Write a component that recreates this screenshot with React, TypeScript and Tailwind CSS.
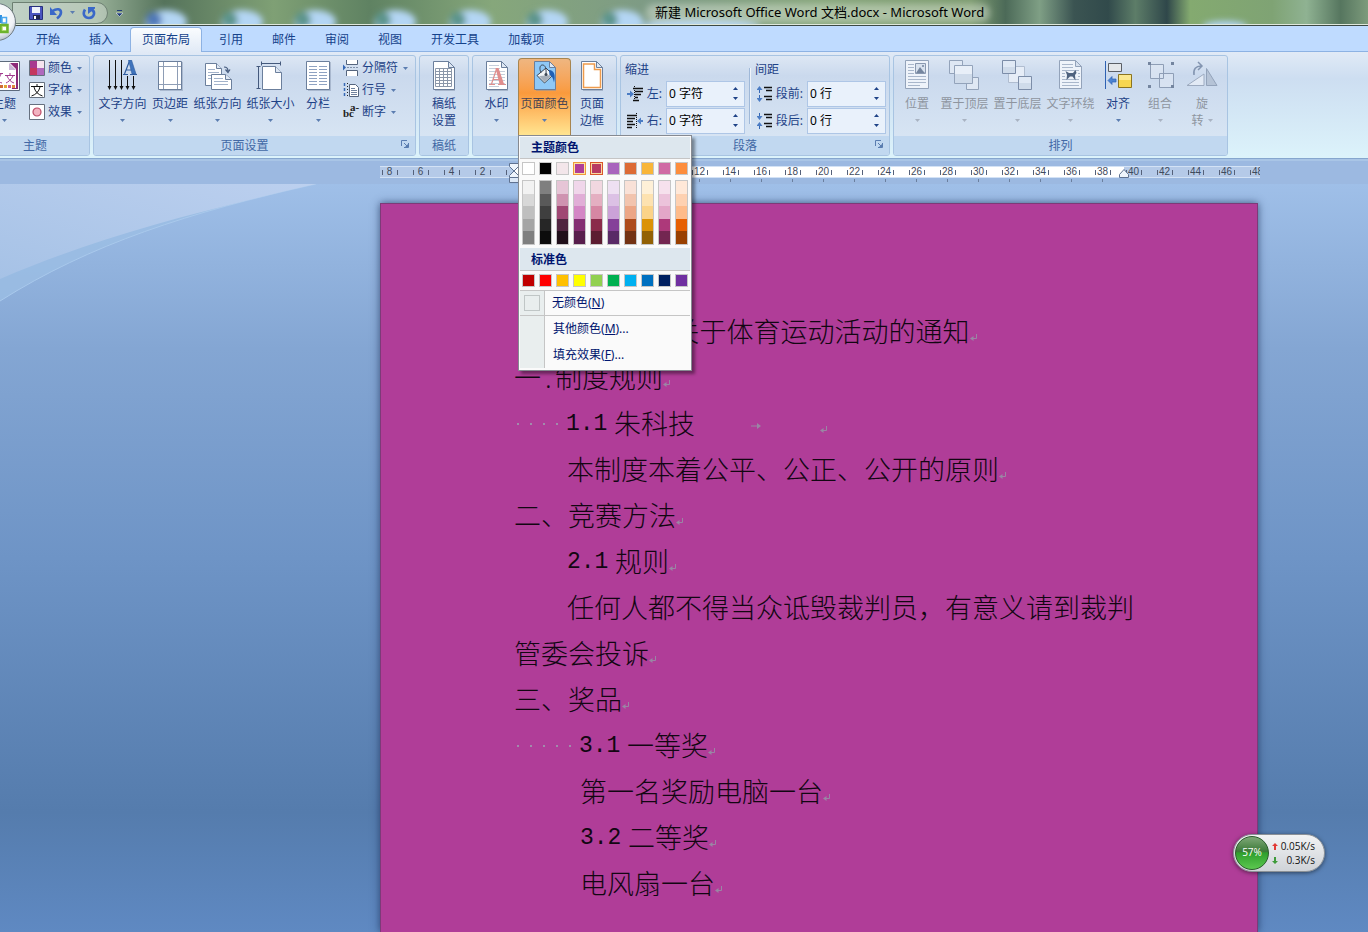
import type { ReactNode } from 'react';

const THEME = ['#ffffff', '#000000', '#f3e6ea', '#b03d98', '#b83a63', '#a964bd', '#dd6b35', '#f9b639', '#d06aa4', '#fd8d3c'];

const SHADES = [
  ['#f2f2f2', '#d8d8d8', '#bfbfbf', '#a5a5a5', '#7f7f7f'],
  ['#7f7f7f', '#595959', '#3f3f3f', '#262626', '#0c0c0c'],
  ['#e6c5d6', '#cf93b0', '#a04874', '#502440', '#200f1a'],
  ['#f0d6ea', '#e1aed7', '#d486c5', '#842e72', '#581e4c'],
  ['#f1d7e0', '#e4afc1', '#d687a3', '#8a2b4a', '#5c1d31'],
  ['#eee0f2', '#dcc1e5', '#cba2d8', '#854099', '#592a66'],
  ['#f9e1d7', '#f2c4ae', '#eca686', '#ad4b1c', '#733213'],
  ['#fef0d7', '#fde2b0', '#fbd388', '#db9206', '#926104'],
  ['#f6e1ed', '#ecc3db', '#e3a6c8', '#ad397a', '#732651'],
  ['#ffe8d8', '#fed1b1', '#febb8a', '#e65f02', '#994001'],
];

const STANDARD = ['#c00000', '#ff0000', '#ffc000', '#ffff00', '#92d050', '#00b050', '#00b0f0', '#0070c0', '#002060', '#7030a0'];

const TABS = ['开始', '插入', '页面布局', '引用', '邮件', '审阅', '视图', '开发工具', '加载项'];

const RULER = [8, 6, 4, 2, 0, 2, 4, 6, 8, 10, 12, 14, 16, 18, 20, 22, 24, 26, 28, 30, 32, 34, 36, 38, 40, 42, 44, 46, 48];

function Arrow({ dim = false }: { dim?: boolean }) {
  return (
    <svg width="5" height="3" viewBox="0 0 5 3" className="shrink-0" aria-hidden="true">
      <path d="M0 0h5L2.500 3z" fill={dim ? '#a9b3c2' : '#5b7db0'} />
    </svg>
  );
}

function Icon({ size = 32, children }: { size?: number; children: ReactNode }) {
  return (
    <svg width={size} height={size} viewBox={`0 0 ${size} ${size}`} fill="none" className="shrink-0" aria-hidden="true">
      {children}
    </svg>
  );
}

const Sheet = ({ stroke = '#6b7f9c', fill = '#fff' }: { stroke?: string; fill?: string }) => (
  <>
    <path d="M6 2h14l6 6v22H6z" fill="#7f8fa8" opacity=".5" transform="translate(1 1)" />
    <path d="M5.500 1.500h15l6 6v22h-21z" fill={fill} stroke={stroke} />
    <path d="M20.500 1.500v6h6z" fill="#dfe8f4" stroke={stroke} />
  </>
);

const icons = {
  theme: (
    <Icon>
      <path d="M-8 1.500h39.500v29H-8z" fill="#fff" stroke="#5d6a7c" />
      <path d="M21 3h9v26H24z" fill="#8d2a79" />
      <path d="M4 3h18l6 6v19H4z" fill="#fff" />
      <path d="M21 3v7h7z" fill="#c9b6d6" />
      <path d="M9 10v3M3 13.500h12M5 14c2 5 5 8 9 9M13 14c-2 5-5 8-9 9M22 13v2M17 15.500h10M19 16c2 4 4 6 7 7M25 16c-2 4-5 6-7 7" stroke="#a13a8d" />
      <path d="M8 25h3v3H8z" fill="#e2a532" />
      <path d="M12 25h3v3h-3z" fill="#d06a35" />
      <path d="M16 25h3v3h-3z" fill="#e2a532" />
      <path d="M20 25h3v3h-3z" fill="#cf5b8f" />
      <path d="M24 25h3v3h-3z" fill="#e08a3c" />
    </Icon>
  ),
  colors: (
    <Icon size={16}>
      <path d="M.5.5h15v15H.5z" fill="#fff" stroke="#66707f" />
      <path d="M1 1h7v7H1z" fill="#a8398f" />
      <path d="M8 1h7v7H8z" fill="#f6e4ee" />
      <path d="M1 8h7v7H1z" fill="#c4375f" />
      <path d="M8 8h7v7H8z" fill="#b068bd" />
    </Icon>
  ),
  fonts: (
    <Icon size={16}>
      <path d="M.5.5h15v15H.5z" fill="#fff" stroke="#66707f" />
      <path d="M8 2v2.500M2 4.500h12M5 5c1 4.500 4 7.500 8.500 9M11 5c-1 4.500-4 7.500-8.500 9" stroke="#111" />
    </Icon>
  ),
  effects: (
    <Icon size={16}>
      <path d="M.5.5h15v15H.5z" fill="#fff" stroke="#66707f" />
      <circle cx="8" cy="8" r="4" fill="#f3b3c0" stroke="#bd4a66" strokeWidth="1.200" />
    </Icon>
  ),
  textDir: (
    <Icon>
      <path d="M2.500 0v27M8.500 0v27M14.500 0v27M20.500 16v11M26.500 16v11" stroke="#111" />
      <path d="M.5 26h4l-2 4zM6.500 26h4l-2 4zM12.500 26h4l-2 4zM18.500 26h4l-2 4zM24.500 26h4l-2 4z" fill="#111" />
      <path d="M16 14.500h5M23 14.500h7" stroke="#2f5c9e" />
      <path d="M22.500 1L17.500 14M19 10h7" stroke="#2f5c9e" strokeWidth="1.200" />
      <path d="M21.500 0H24.500L29 14h-4z" fill="#3f74bd" stroke="#2f5c9e" strokeWidth=".6" />
    </Icon>
  ),
  margins: (
    <Icon>
      <path d="M6 2h23v29H6z" fill="#7f8fa8" opacity=".45" />
      <path d="M4.500 1.500h23v28h-23z" fill="#fff" stroke="#6b7f9c" />
      <path d="M9.500 2v27M23.500 2v27M5 6.500h22M5 24.500h22" stroke="#8e9db5" />
    </Icon>
  ),
  orient: (
    <Icon>
      <path d="M3.500 3.500h11l5 5v17h-16z" fill="#fff" stroke="#6b7f9c" />
      <path d="M14.500 3.500v5h5" fill="#dfe8f4" stroke="#6b7f9c" />
      <path d="M6 9.500h7M6 12.500h11M6 15.500h5M6 18.500h3" stroke="#a3b3cb" />
      <path d="M9.500 14.500h14l6 5v10h-20z" fill="#fff" stroke="#6b7f9c" />
      <path d="M23.500 14.500v5h6" fill="#dfe8f4" stroke="#6b7f9c" />
      <path d="M12 18.500h9M12 21.500h14M12 24.500h14" stroke="#a3b3cb" />
      <path d="M22 7c3 0 4 1.500 4 4M23.500 9.500l2.500 3 2-3" stroke="#44597c" strokeWidth="1.200" />
    </Icon>
  ),
  size: (
    <Icon>
      <path d="M6 3.500h20M6.500 1.500v4M25.500 1.500v4M3.500 6v23M1.500 6.500h4M1.500 28.500h4" stroke="#44597c" />
      <path d="M7.500 6.500h13l6 6v17h-19z" fill="#fff" stroke="#6b7f9c" />
      <path d="M20.500 6.500v6h6" fill="#dfe8f4" stroke="#6b7f9c" />
    </Icon>
  ),
  columns: (
    <Icon>
      <path d="M6 2h23v29H6z" fill="#7f8fa8" opacity=".45" />
      <path d="M4.500 1.500h23v28h-23z" fill="#fff" stroke="#6b7f9c" />
      <path d="M7 6.500h8M17 6.500h8M7 9.500h8M17 9.500h8M7 12.500h8M17 12.500h8M7 15.500h8M17 15.500h8M7 18.500h8M17 18.500h8M7 21.500h8M17 21.500h8M7 24.500h8M17 24.500h8" stroke="#8ea2c2" />
    </Icon>
  ),
  breaks: (
    <Icon size={16}>
      <path d="M3.500 0v4.500h11V0M3.500 16v-5.500h11V16" fill="#fff" stroke="#55657e" />
      <path d="M4 7.500h12" stroke="#8191aa" strokeDasharray="2 1" />
      <path d="M0 4.500l3 3-3 3z" fill="#3668b5" />
    </Icon>
  ),
  lines: (
    <Icon size={16}>
      <path d="M1.500 1v3M1.500 6v3M1.500 11v3" stroke="#3668b5" strokeWidth="1.500" />
      <path d="M4.500 1v14" stroke="#222" strokeDasharray="1 2" />
      <path d="M6.500 2.500h6l3 3v9h-9z" fill="#fff" stroke="#55657e" />
      <path d="M8 6.500h4M8 8.500h6M8 10.500h6M8 12.500h6" stroke="#6f819d" />
    </Icon>
  ),
  grid: (
    <Icon>
      <Sheet />
      <path d="M7.500 8.500h16v18h-16zM7 11.500h17M7 14.500h17M7 17.500h17M7 20.500h17M7 23.500h17M11.500 8v18M15.500 8v18M19.500 8v18" stroke="#8b97a9" />
    </Icon>
  ),
  watermark: (
    <Icon>
      <Sheet />
      <path d="M8 5.500h10M8 8.500h11M8 11.500h16M8 14.500h16M8 17.500h16M8 20.500h16M8 23.500h16M8 26.500h10" stroke="#c5cedb" />
      <path d="M8 24.500h6M17 24.500h8M15.500 9L10.500 24M12 19.500h8" stroke="#dd8f8f" strokeWidth="1.200" />
      <path d="M14.500 8h3l5.500 16h-4.500z" fill="#e08d8d" />
    </Icon>
  ),
  pageColor: (
    <Icon>
      <Sheet fill="#8fc8f6" />
      <path d="M8 15.500l9-7.500 7 7-8.500 8z" fill="#f2f4f6" stroke="#3c4654" />
      <path d="M10 16l5.500 6 7.500-7z" fill="#a5adb7" />
      <path d="M12 13c-2-5-1-8 1.500-8s4 3 3.500 9" stroke="#3c4654" />
      <circle cx="17" cy="14.500" r="1.500" fill="#3c4654" />
      <path d="M20 10c5 0 7 5 5 12.500-1-4-1.500-6-4.500-7.500z" fill="#1f5fb4" />
    </Icon>
  ),
  border: (
    <Icon>
      <Sheet />
      <path d="M7.500 4h11v5.500h6v18h-17z" stroke="#ee9b4c" strokeWidth="1.500" />
    </Icon>
  ),
  position: (
    <Icon>
      <path d="M4.500 .5h23v28h-23z" fill="#eef3fa" stroke="#93a3ba" />
      <path d="M14.500 3.500h10v10h-10z" fill="#d9e2ee" stroke="#8a99b0" />
      <path d="M15 13l4-6 3 4 2 2z" fill="#75869f" />
      <circle cx="22" cy="6" r="1" fill="#75869f" />
      <path d="M7 4.500h6M7 7.500h6M7 10.500h6M7 13.500h6M7 16.500h18M7 19.500h18M7 22.500h18M7 25.500h12" stroke="#a9b7cb" />
    </Icon>
  ),
  front: (
    <Icon>
      <path d="M.5 .5h13v13h-13zM17.500 17.500h12v12h-12z" fill="#dfe8f4" stroke="#93a3ba" />
      <path d="M5.500 5.500h18v18h-18z" fill="#e8eff8" stroke="#93a3ba" />
      <path d="M6 14h17v9H6z" fill="#cfdbea" />
    </Icon>
  ),
  back: (
    <Icon>
      <path d="M6.500 6.500h16v16h-16z" fill="#e6edf7" stroke="#b0bdd0" />
      <path d="M.5 .5h13v13h-13zM16.500 16.500h13v13h-13z" fill="#e0e9f5" stroke="#7c8da8" />
      <path d="M1 7h12v6H1zM17 23h12v6H17z" fill="#cfdbea" />
    </Icon>
  ),
  wrap: (
    <Icon>
      <path d="M4.500 .5h16l6 6v22h-22z" fill="#eef3fa" stroke="#93a3ba" />
      <path d="M20.500 .5v6h6z" fill="#d6e0ee" stroke="#93a3ba" />
      <path d="M7 4.500h11M7 7.500h11M7 10.500h17M7 13.500h3M23 13.500h2M7 16.500h3M23 16.500h2M7 19.500h17M7 22.500h17M7 25.500h17" stroke="#a9b7cb" />
      <path d="M10.500 11l3.500 2h4l2.500-3 1 3-1.500 2 .5 5.500-3-4h-2.500l-3.500 3.500.5-5z" fill="#4f637f" />
    </Icon>
  ),
  align: (
    <Icon>
      <path d="M3.500 1v28" stroke="#2f62b3" />
      <path d="M6.500 3.500h13v8h-13z" fill="#e4e7ea" stroke="#5a5f66" />
      <path d="M16.500 14.500h13v13h-13z" fill="#f7d64f" stroke="#8b7420" />
      <path d="M17 15h12v5H17z" fill="#fbe88f" />
      <path d="M6 20.500l4-4v2.500h4v3h-4v2.500z" fill="#4b82d0" stroke="#2f62b3" strokeWidth=".7" />
    </Icon>
  ),
  group: (
    <Icon>
      <path d="M6.500 4.500h13v14h-13zM15.500 13.500h14v14h-14z" fill="#dfe8f4" fillOpacity=".6" stroke="#8e9eb6" />
      <path d="M4 2h3v3H4zM27 2h3v3h-3zM4 25h3v3H4zM27 25h3v3h-3z" fill="#74859f" />
    </Icon>
  ),
  rotate: (
    <Icon>
      <path d="M1 25.500h17V14z" fill="#e2eaf5" stroke="#9dabc0" />
      <path d="M20.500 8.500v17h10.500z" fill="#b5c3d6" stroke="#93a3ba" />
      <path d="M8 15c-1-6 2-9 7-9M12 2l4 4-4 4" stroke="#8294b0" strokeWidth="1.500" />
    </Icon>
  ),
  indentL: (
    <Icon size={16}>
      <path d="M6 2.500h10M8 5.500h8M8 8.500h6M8 11.500h3M6 14.500h6" stroke="#111" strokeWidth="1.500" />
      <path d="M7.500 0v16" stroke="#111" strokeDasharray="1 1" />
      <path d="M0 7h3V4.500L7 8l-4 3.500V9H0z" fill="#4b7cc4" />
    </Icon>
  ),
  indentR: (
    <Icon size={16}>
      <path d="M0 2.500h10M0 5.500h8M0 8.500h6M0 11.500h8M0 14.500h5" stroke="#111" strokeWidth="1.500" />
      <path d="M9.500 0v16" stroke="#111" strokeDasharray="1 1" />
      <path d="M16 7h-2V4.500L10 8l4 3.500V9h2z" fill="#4b7cc4" />
    </Icon>
  ),
  before: (
    <Icon size={16}>
      <path d="M7 1.500h8M9 4.500h6M7 10.500h8M9 13.500h6" stroke="#111" strokeWidth="1.500" />
      <path d="M2.500 2v5M2.500 9v5" stroke="#3668b5" />
      <path d="M2.500 0L5.500 4h-6zM2.500 16l3-4h-6z" fill="#4b7cc4" />
    </Icon>
  ),
  after: (
    <Icon size={16}>
      <path d="M7 1.500h8M9 4.500h6M7 10.500h8M9 13.500h6" stroke="#111" strokeWidth="1.500" />
      <path d="M2.500 0v5M2.500 11v5" stroke="#3668b5" />
      <path d="M2.500 7L5.500 3h-6zM2.500 9l3 4h-6z" fill="#4b7cc4" />
    </Icon>
  ),
};

function Hyphen() {
  return (
    <svg width="16" height="16" viewBox="0 0 16 16" className="shrink-0 overflow-visible" aria-hidden="true">
      <g fontFamily="Liberation Serif, serif" fontWeight="bold" fontSize="11" fill="#222">
        <text x="0" y="13">
          bc
        </text>
        <text x="7" y="7">
          a-
        </text>
      </g>
    </svg>
  );
}

type BigProps = {
  icon: ReactNode;
  lines: string[];
  width: string;
  arrow?: 'below' | 'inline' | 'none';
  disabled?: boolean;
  active?: boolean;
};

function BigButton({ icon, lines, width, arrow = 'below', disabled = false, active = false }: BigProps) {
  const tone = disabled ? 'text-[#8e959f]' : active ? 'text-[#4a4552]' : 'text-[#1e4287]';
  const face = active
    ? 'rounded-t-sm border-x border-t border-[#a8854f] bg-linear-to-b from-[#efb680] via-[#fa9a3c] via-45% to-[#ffe590] pt-px'
    : 'pt-1';
  return (
    <button type="button" disabled={disabled} className={`flex h-full flex-col items-center whitespace-nowrap ${width} ${tone} ${face}`}>
      {icon}
      <span className="mt-[3px] flex flex-col items-center leading-[17px]">
        {lines.map((line, i) => (
          <span key={line} className="flex items-center gap-1">
            {line}
            {arrow === 'inline' && i === lines.length - 1 && <Arrow dim={disabled} />}
          </span>
        ))}
      </span>
      {arrow === 'below' && (
        <span className="flex h-[17px] items-center">
          <Arrow dim={disabled} />
        </span>
      )}
    </button>
  );
}

function SmallButton({ icon, label }: { icon: ReactNode; label: string }) {
  return (
    <button type="button" className="flex h-[22px] items-center gap-[3px] whitespace-nowrap text-[#1e4287]">
      {icon}
      <span className="mr-[2px]">{label}</span>
      <Arrow />
    </button>
  );
}

function Group({ title, width, launcher = false, children }: { title: string; width: string; launcher?: boolean; children: ReactNode }) {
  return (
    <section
      aria-label={title}
      className={`flex shrink-0 flex-col rounded-[3px] border border-[#a8c4e2] bg-linear-to-b from-[#dde7f4] via-[#cad9ed] via-20% to-[#dbe8f5] ${width}`}
    >
      <div className="flex h-20 px-[2px]">{children}</div>
      <div className="flex h-[19px] items-center justify-center rounded-b-[2px] bg-[#c1d8f0] text-[#4268a5]">
        <span className="flex-1 text-center">{title}</span>
        {launcher && (
          <button type="button" aria-label={`${title}选项`} className="mb-1 flex w-5 justify-center">
            <svg width="8" height="8" viewBox="0 0 8 8" fill="none">
              <path d="M.5 6V.5H6M3 3l3 3M7.500 3v4.500H3" stroke="#5a7db0" />
              <path d="M7 4v3H4z" fill="#5a7db0" />
            </svg>
          </button>
        )}
      </div>
    </section>
  );
}

function Spin({ id, icon, label, value }: { id: string; icon: ReactNode; label: string; value: string }) {
  return (
    <div className="flex h-[27px] items-center pl-[2px]">
      {icon}
      <label htmlFor={id} className="flex-1 pr-1 text-right text-[#1e4287]">
        {label}
      </label>
      <div className="flex h-[26px] w-[79px] items-center border border-[#aec6e6] bg-[#e9f1fb]">
        <input id={id} defaultValue={value} className="h-full w-0 flex-1 bg-transparent pb-px pl-[2px] text-black outline-none" />
        <div className="flex w-[18px] flex-col items-center gap-[7px]">
          <button type="button" aria-label={`${label}增加`}>
            <svg width="5" height="3" viewBox="0 0 5 3" className="block">
              <path d="M0 3h5L2.500 0z" fill="#1e4287" />
            </svg>
          </button>
          <button type="button" aria-label={`${label}减少`}>
            <svg width="5" height="3" viewBox="0 0 5 3" className="block">
              <path d="M0 0h5L2.500 3z" fill="#1e4287" />
            </svg>
          </button>
        </div>
      </div>
    </div>
  );
}

function ColorMenu() {
  const ring = (i: number) =>
    i === 3 ? 'border-[#ef9a3c] ring-1 ring-inset ring-[#fde6a4]' : i === 4 ? 'border-[#d8562a] ring-1 ring-inset ring-[#fbd9a0]' : 'border-[#c6c6c6]';
  return (
    <div
      role="menu"
      className="absolute top-full left-0 z-20 w-[174px] border border-[#868a91] bg-[#fafafa] p-px pb-[2px] text-[#00156e] shadow-[3px_3px_3px_rgba(0,0,0,0.4)]"
    >
      <div className="h-[22px] border-b border-[#c5c5c5] bg-[#dde7ee] pl-[11px] leading-[21px] font-bold">主题颜色</div>
      <div className="flex justify-between px-[2px] pt-[3px]">
        {THEME.map((c, i) => (
          <button type="button" key={c} aria-label={`主题颜色 ${c}`} className={`h-[13px] w-[13px] border ${ring(i)}`} style={{ backgroundColor: c }} />
        ))}
      </div>
      <div className="flex justify-between px-[2px] pt-[5px] pb-[3px]">
        {SHADES.map((column, i) => (
          <div key={i} className="flex h-[65px] w-[13px] flex-col border border-[#c6c6c6]">
            {column.map((c) => (
              <button type="button" key={c} aria-label={`颜色 ${c}`} className="flex-1" style={{ backgroundColor: c }} />
            ))}
          </div>
        ))}
      </div>
      <div className="h-[23px] border-b border-[#c5c5c5] bg-[#dde7ee] pl-[11px] leading-[23px] font-bold">标准色</div>
      <div className="flex justify-between px-[2px] pt-[3px] pb-[3px]">
        {STANDARD.map((c) => (
          <button type="button" key={c} aria-label={`标准色 ${c}`} className="h-[13px] w-[13px] border border-[#c6c6c6]" style={{ backgroundColor: c }} />
        ))}
      </div>
      <button type="button" role="menuitem" className="flex h-[26px] w-full items-center border-y border-[#c5c5c5] text-left">
        <span className="flex h-full w-[25px] items-center justify-center border-r border-[#c5c5c5] bg-[#e9eeee]">
          <span className="h-4 w-4 border border-[#c0c6c6]" />
        </span>
        <span className="pl-[7px]">
          无颜色(<u>N</u>)
        </span>
      </button>
      {[
        ['其他颜色', 'M'],
        ['填充效果', 'F'],
      ].map(([name, key]) => (
        <button type="button" role="menuitem" key={key} className="flex h-[26px] w-full items-center text-left">
          <span className="h-full w-[25px] border-r border-[#c5c5c5] bg-[#e9eeee]" />
          <span className="pl-2">
            {name}(<u>{key}</u>)...
          </span>
        </button>
      ))}
    </div>
  );
}

function TitleBar() {
  return (
    <header className="relative flex h-[26px] shrink-0 items-center border-b border-[#3c4a45] bg-[#7f9c81]">
      <svg className="absolute inset-0 h-full w-full" viewBox="0 0 1368 25" preserveAspectRatio="none" aria-hidden="true">
        <defs>
          <linearGradient id="sky" x1="0" x2="1" y1="0" y2="0">
            <stop offset="0" stopColor="#a9c0b2" />
            <stop offset=".07" stopColor="#98b098" />
            <stop offset=".12" stopColor="#55735b" />
            <stop offset=".2" stopColor="#7fa075" />
            <stop offset=".27" stopColor="#5f8262" />
            <stop offset=".36" stopColor="#86a77b" />
            <stop offset=".48" stopColor="#7d9a86" />
            <stop offset=".6" stopColor="#87a67c" />
            <stop offset=".71" stopColor="#7d9b70" />
            <stop offset=".735" stopColor="#4c6a58" />
            <stop offset=".76" stopColor="#7f9f85" />
            <stop offset=".785" stopColor="#3b5452" />
            <stop offset=".81" stopColor="#314a4b" />
            <stop offset=".83" stopColor="#5d7d68" />
            <stop offset=".853" stopColor="#2f474a" />
            <stop offset=".87" stopColor="#84aa70" />
            <stop offset=".93" stopColor="#7fa374" />
            <stop offset=".955" stopColor="#8fb292" />
            <stop offset=".98" stopColor="#56765f" />
            <stop offset="1" stopColor="#7d9b7c" />
          </linearGradient>
          <filter id="soft" x="-10%" y="-60%" width="120%" height="220%">
            <feGaussianBlur stdDeviation="3" />
          </filter>
        </defs>
        <path d="M0 0h1368v25H0z" fill="url(#sky)" />
        <g filter="url(#soft)">
          {[166, 242, 315, 395, 470, 547, 622].map((x) => (
            <g key={x}>
              <ellipse cx={x} cy="22" rx="21" ry="12" fill="#b4d6f4" />
              <circle cx={x - 12} cy="20" r="8" fill={x === 166 ? '#4f78b8' : '#5c948c'} />
            </g>
          ))}
          <ellipse cx="700" cy="26" rx="60" ry="6" fill="#b4d6f4" />
          <rect x="646" y="4" width="344" height="18" rx="8" fill="#dfe9dc" opacity=".45" />
          <ellipse cx="1225" cy="26" rx="22" ry="5" fill="#b4d6f4" />
        </g>
        <path d="M0 24.500h1368" stroke="#dfe8dc" />
      </svg>
      <div className="relative flex w-[655px] shrink-0 items-center pl-3">
        <div className="flex h-[22px] w-24 items-center gap-[7px] rounded-r-full border border-[#6d8072] bg-white/30 pl-4">
          <button type="button" aria-label="保存">
            <svg width="14" height="14" viewBox="0 0 14 14" className="block">
              <path d="M.5.5h13v13h-13z" fill="#4a55c0" stroke="#27307c" />
              <path d="M3 1h8v6H3z" fill="#eef2fb" />
              <path d="M4 9h7v4H4z" fill="#20264f" />
              <path d="M5 10h2v3H5z" fill="#fff" />
            </svg>
          </button>
          <button type="button" aria-label="撤消" className="flex items-center gap-[7px]">
            <svg width="13" height="14" viewBox="0 0 13 14" fill="none">
              <path d="M2.500 5C7 2 11 3 11 6.500c0 2.500-2 4.500-4 6" stroke="#3a68c8" strokeWidth="2.600" />
              <path d="M0 1v8h7z" fill="#3a68c8" />
            </svg>
            <Arrow />
          </button>
          <button type="button" aria-label="重复">
            <svg width="14" height="14" viewBox="0 0 14 14" fill="none" className="block">
              <path d="M3 3.500c-3 5 0 8.500 4 8.500 5 0 7-6 2.500-8.500" stroke="#3a68c8" strokeWidth="2.600" />
              <path d="M6 1h7v1.500L6 8z" fill="#3a68c8" />
            </svg>
          </button>
        </div>
        <button type="button" aria-label="自定义快速访问工具栏" className="ml-2">
          <svg width="7" height="8" viewBox="0 0 7 8" className="block">
            <path d="M1 1.500h5" stroke="#1e3a78" />
            <path d="M0 4h7L3.500 7.500z" fill="#1e3a78" stroke="#fff" strokeWidth=".5" />
          </svg>
        </button>
      </div>
      <h1 className="relative pt-px text-[13px] whitespace-nowrap text-black">新建 Microsoft Office Word 文档.docx - Microsoft Word</h1>
      <button type="button" aria-label="Office 按钮" className="absolute top-[3px] -left-[22px] z-10 h-[38px] w-[38px]">
        <svg width="38" height="38" viewBox="0 0 38 38">
          <defs>
            <radialGradient id="orb" cx=".5" cy=".35" r=".65">
              <stop offset="0" stopColor="#fff" />
              <stop offset=".7" stopColor="#f1f3f7" />
              <stop offset="1" stopColor="#b5bfcc" />
            </radialGradient>
          </defs>
          <circle cx="19" cy="19" r="18.500" fill="url(#orb)" stroke="#6e7a80" />
          <path d="M15 13h8v6h-8z" fill="#fff" stroke="#2f8fe0" strokeWidth="2" />
          <path d="M24 14.500h4.500V20H24z" fill="#fff" stroke="#4aa8ee" strokeWidth="1.500" />
          <path d="M22.500 22h7v7h-7z" fill="#c5e58a" stroke="#6cb32c" strokeWidth="2.500" />
          <path d="M25 24h3v3h-3z" fill="#fff" />
        </svg>
      </button>
    </header>
  );
}

function Ribbon() {
  return (
    <div className="relative flex h-[107px] shrink-0 gap-[3px] border-b border-[#86a6ce] bg-linear-to-b from-[#e1eaf6] via-[#cddef1] via-25% to-[#dcf3fb] pt-[3px] pb-[2px] shadow-[0_2px_0_#a9c5e6]">
      <div className="-ml-5 flex shrink-0">
        <Group title="主题" width="w-[110px]">
          <BigButton icon={icons.theme} lines={['主题']} width="w-[42px]" />
          <div className="flex flex-col pt-px pl-1">
            <SmallButton icon={icons.colors} label="颜色" />
            <SmallButton icon={icons.fonts} label="字体" />
            <SmallButton icon={icons.effects} label="效果" />
          </div>
        </Group>
      </div>
      <Group title="页面设置" width="w-[323px]" launcher>
        <BigButton icon={icons.textDir} lines={['文字方向']} width="w-[53px]" />
        <BigButton icon={icons.margins} lines={['页边距']} width="w-[42px]" />
        <BigButton icon={icons.orient} lines={['纸张方向']} width="w-[53px]" />
        <BigButton icon={icons.size} lines={['纸张大小']} width="w-[53px]" />
        <BigButton icon={icons.columns} lines={['分栏']} width="w-[42px]" />
        <div className="flex flex-col pt-px pl-1">
          <SmallButton icon={icons.breaks} label="分隔符" />
          <SmallButton icon={icons.lines} label="行号" />
          <SmallButton icon={<Hyphen />} label="断字" />
        </div>
      </Group>
      <Group title="稿纸" width="w-[50px]">
        <BigButton icon={icons.grid} lines={['稿纸', '设置']} width="w-full" arrow="none" />
      </Group>
      <Group title="页面背景" width="w-[145px]">
        <BigButton icon={icons.watermark} lines={['水印']} width="w-[43px]" />
        <div className="relative h-[79px] pt-[2px]">
          <BigButton icon={icons.pageColor} lines={['页面颜色']} width="w-[53px]" active />
          <ColorMenu />
        </div>
        <BigButton icon={icons.border} lines={['页面', '边框']} width="w-[42px]" arrow="none" />
      </Group>
      <Group title="段落" width="w-[270px]" launcher>
        <div className="flex w-[122px] flex-col pl-[2px]">
          <span className="pt-1 leading-5 text-[#1e4287]">缩进</span>
          <Spin id="indent-left" icon={icons.indentL} label="左:" value="0 字符" />
          <Spin id="indent-right" icon={icons.indentR} label="右:" value="0 字符" />
        </div>
        <div className="mx-1 mt-3 h-14 w-[2px] border-l border-[#9fb8d8] bg-white/70" />
        <div className="flex w-[131px] flex-col">
          <span className="pt-1 leading-5 text-[#1e4287]">间距</span>
          <Spin id="space-before" icon={icons.before} label="段前:" value="0 行" />
          <Spin id="space-after" icon={icons.after} label="段后:" value="0 行" />
        </div>
      </Group>
      <Group title="排列" width="w-[335px]">
        <BigButton icon={icons.position} lines={['位置']} width="w-[42px]" disabled />
        <BigButton icon={icons.front} lines={['置于顶层']} width="w-[53px]" disabled />
        <BigButton icon={icons.back} lines={['置于底层']} width="w-[53px]" disabled />
        <BigButton icon={icons.wrap} lines={['文字环绕']} width="w-[53px]" disabled />
        <BigButton icon={icons.align} lines={['对齐']} width="w-[42px]" />
        <BigButton icon={icons.group} lines={['组合']} width="w-[42px]" disabled />
        <BigButton icon={icons.rotate} lines={['旋', '转']} width="w-[42px]" arrow="inline" disabled />
      </Group>
    </div>
  );
}

function Ruler() {
  return (
    <div className="h-[25px] shrink-0 bg-[#9cb9e1] pt-[7px]">
      <div className="relative mr-[108px] ml-[380px]">
        <div className="h-3 border-y border-[#d3e2f5] bg-[linear-gradient(to_right,#b5cae8_134px,#fff_134px,#fff_744px,#b5cae8_744px)]" />
        <div className="absolute inset-x-0 top-0 flex overflow-hidden font-['Liberation_Sans',sans-serif] text-[10px] leading-3 text-[#3f4a5c]">
          <div className="-ml-[6px] flex">
            {RULER.map((n, i) => (
              <div key={i} className="flex w-[31px] shrink-0 flex-col items-center">
                <div className="flex h-3 w-4 items-center justify-between">
                  <span className="h-[5px] w-px shrink-0 bg-[#55617a]" />
                  <span className="flex w-3 shrink-0 justify-center">{i === 4 ? '' : n}</span>
                  <span className="h-[5px] w-px shrink-0 bg-[#55617a]" />
                </div>
                <span className={`mt-px h-[3px] w-px ${i > 4 && i < 24 ? 'bg-[#6b7f9e]' : ''}`} />
              </div>
            ))}
          </div>
        </div>
        <svg width="10" height="20" viewBox="0 0 10 20" className="absolute -top-[3px] left-[129px]" aria-hidden="true">
          <path d="M.5.5h9v3L5 8l4.500 4.500v2h-9v-2L5 8 .5 3.500z" fill="#eef4fc" stroke="#5f7291" />
          <path d="M.5 14.500h9v5h-9z" fill="#dce8f7" stroke="#5f7291" />
        </svg>
        <svg width="10" height="9" viewBox="0 0 10 9" className="absolute top-[3px] left-[739px]" aria-hidden="true">
          <path d="M.5 8.500v-3L5 .5l4.500 5v3z" fill="#eef4fc" stroke="#5f7291" />
        </svg>
      </div>
    </div>
  );
}

function Mark() {
  return (
    <svg width="8" height="8" viewBox="0 0 8 8" fill="none" className="mt-3 shrink-0" aria-hidden="true">
      <path d="M6.500 0v4.500H2" stroke="#9a86a4" />
      <path d="M0 4.500L3.500 2v5z" fill="#9a86a4" />
    </svg>
  );
}

function Dots({ count }: { count: number }) {
  return (
    <span className="flex">
      {Array.from({ length: count }, (_, i) => (
        <span key={i} className="flex w-[13px] pl-[3px]">
          <span className="h-[2px] w-[2px] bg-[#a18cab]" />
        </span>
      ))}
    </span>
  );
}

function Num({ children }: { children: ReactNode }) {
  return <span className="w-12 font-['Liberation_Mono',monospace] text-[23px]">{children}</span>;
}

function Line({ indent = '', dots = 0, num, children }: { indent?: string; dots?: number; num?: string; children: ReactNode }) {
  return (
    <p className={`flex h-[46px] items-center whitespace-nowrap ${indent}`}>
      {dots > 0 && <Dots count={dots} />}
      {num && <Num>{num}</Num>}
      {children}
      <Mark />
    </p>
  );
}

function Page() {
  return (
    <article className="relative mt-[19px] mr-[110px] ml-[380px] flex flex-1 flex-col border-x border-t border-[#7d3a78] bg-[#b03d98] pt-[105px] pr-[121px] pl-[133px] text-[27px] leading-[46px] font-light text-[#120612] shadow-[0_0_8px_rgba(20,40,80,0.7)]">
      <Line indent="justify-center">关于体育运动活动的通知</Line>
      <Line>
        一<span className="w-[14px] pl-1">.</span>制度规则
      </Line>
      <p className="flex h-[46px] items-center">
        <Dots count={4} />
        <Num>1.1</Num>朱科技
        <svg width="10" height="8" viewBox="0 0 10 8" className="mt-1 ml-14 shrink-0" aria-hidden="true">
          <path d="M0 3.500h6V1l4 3-4 3V4.500H0z" fill="#9a86a4" />
        </svg>
        <span className="w-[59px]" />
        <Mark />
      </p>
      <Line indent="pl-[53px]">本制度本着公平、公正、公开的原则</Line>
      <Line>二、竞赛方法</Line>
      <Line indent="pl-[53px]" num="2.1">
        规则
      </Line>
      <p className="flex h-[46px] items-center pl-[53px] whitespace-nowrap">任何人都不得当众诋毁裁判员，有意义请到裁判</p>
      <Line>管委会投诉</Line>
      <Line>三、奖品</Line>
      <Line dots={5} num="3.1">
        一等奖
      </Line>
      <Line indent="pl-[66px]">第一名奖励电脑一台</Line>
      <Line indent="pl-[66px]" num="3.2">
        二等奖
      </Line>
      <Line indent="pl-[66px]">电风扇一台</Line>
    </article>
  );
}

function SpeedWidget() {
  return (
    <aside className="absolute right-[43px] bottom-[60px] z-10 flex h-[38px] w-[92px] items-center rounded-full border border-[#8c9196] bg-linear-to-b from-[#f2f3f4] to-[#cfd3d8] pl-px font-['Open_Sans','Noto_Sans',sans-serif] text-[10px] text-[#111] shadow-[0_1px_4px_rgba(0,0,0,0.5)]">
      <div className="relative flex h-[34px] w-[34px] shrink-0 items-center justify-center rounded-full border border-[#2a5c2a] bg-[linear-gradient(to_bottom,#7fa878,#3c7a38_45%,#2fa02c_50%,#5cc850)] text-white">
        57%
      </div>
      <div className="flex flex-1 flex-col pr-[9px] pl-[3px] leading-[14px]">
        <div className="flex items-center justify-between">
          <svg width="6" height="7" viewBox="0 0 6 7" aria-hidden="true">
            <path d="M3 0l3 3H4v4H2V3H0z" fill="#e23b36" />
          </svg>
          0.05K/s
        </div>
        <div className="flex items-center justify-between">
          <svg width="6" height="7" viewBox="0 0 6 7" aria-hidden="true">
            <path d="M3 7L0 4h2V0h2v4h2z" fill="#3d9b39" />
          </svg>
          0.3K/s
        </div>
      </div>
    </aside>
  );
}

export default function App() {
  return (
    <div className="relative flex min-h-screen flex-col overflow-x-clip bg-[#9cb9e1] font-['Noto_Sans','Noto_Sans_CJK_SC',sans-serif] text-xs">
      <TitleBar />
      <nav className="flex h-[26px] shrink-0 items-end gap-[5px] border-b border-[#8db2e3] bg-[#bfdbff] pl-6 text-[#15428b]" role="tablist">
        {TABS.map((t) => (
          <button
            type="button"
            role="tab"
            key={t}
            aria-selected={t === '页面布局'}
            className={
              t === '页面布局'
                ? '-mb-px h-[25px] rounded-t border border-b-0 border-[#8db2e3] bg-linear-to-b from-[#fafcfe] to-[#e1eaf6] px-[11px]'
                : 'h-[25px] px-3 pt-[2px]'
            }
          >
            {t}
          </button>
        ))}
      </nav>
      <Ribbon />
      <Ruler />
      <main className="relative flex flex-1 flex-col bg-[linear-gradient(to_bottom,#9fbfe8,#84a6d3_22%,#6e94c6_50%,#557cad_84%,#5f89c2)]">
        <svg width="316" height="118" viewBox="0 0 316 118" className="absolute top-0 left-0" aria-hidden="true">
          <defs>
            <linearGradient id="wave" x1="0" x2="1" y1="1" y2="0">
              <stop offset="0" stopColor="#a6c2e6" />
              <stop offset="1" stopColor="#bcd0ef" />
            </linearGradient>
          </defs>
          <path d="M0 0h316C190 28 90 60 0 117z" fill="#9cbfe4" opacity=".75" />
          <path d="M316 0C190 28 90 60 0 117" stroke="#a9c9ec" fill="none" />
          <path d="M0 0h316C200 27 100 52 0 95z" fill="url(#wave)" />
        </svg>
        <Page />
      </main>
      <SpeedWidget />
    </div>
  );
}
